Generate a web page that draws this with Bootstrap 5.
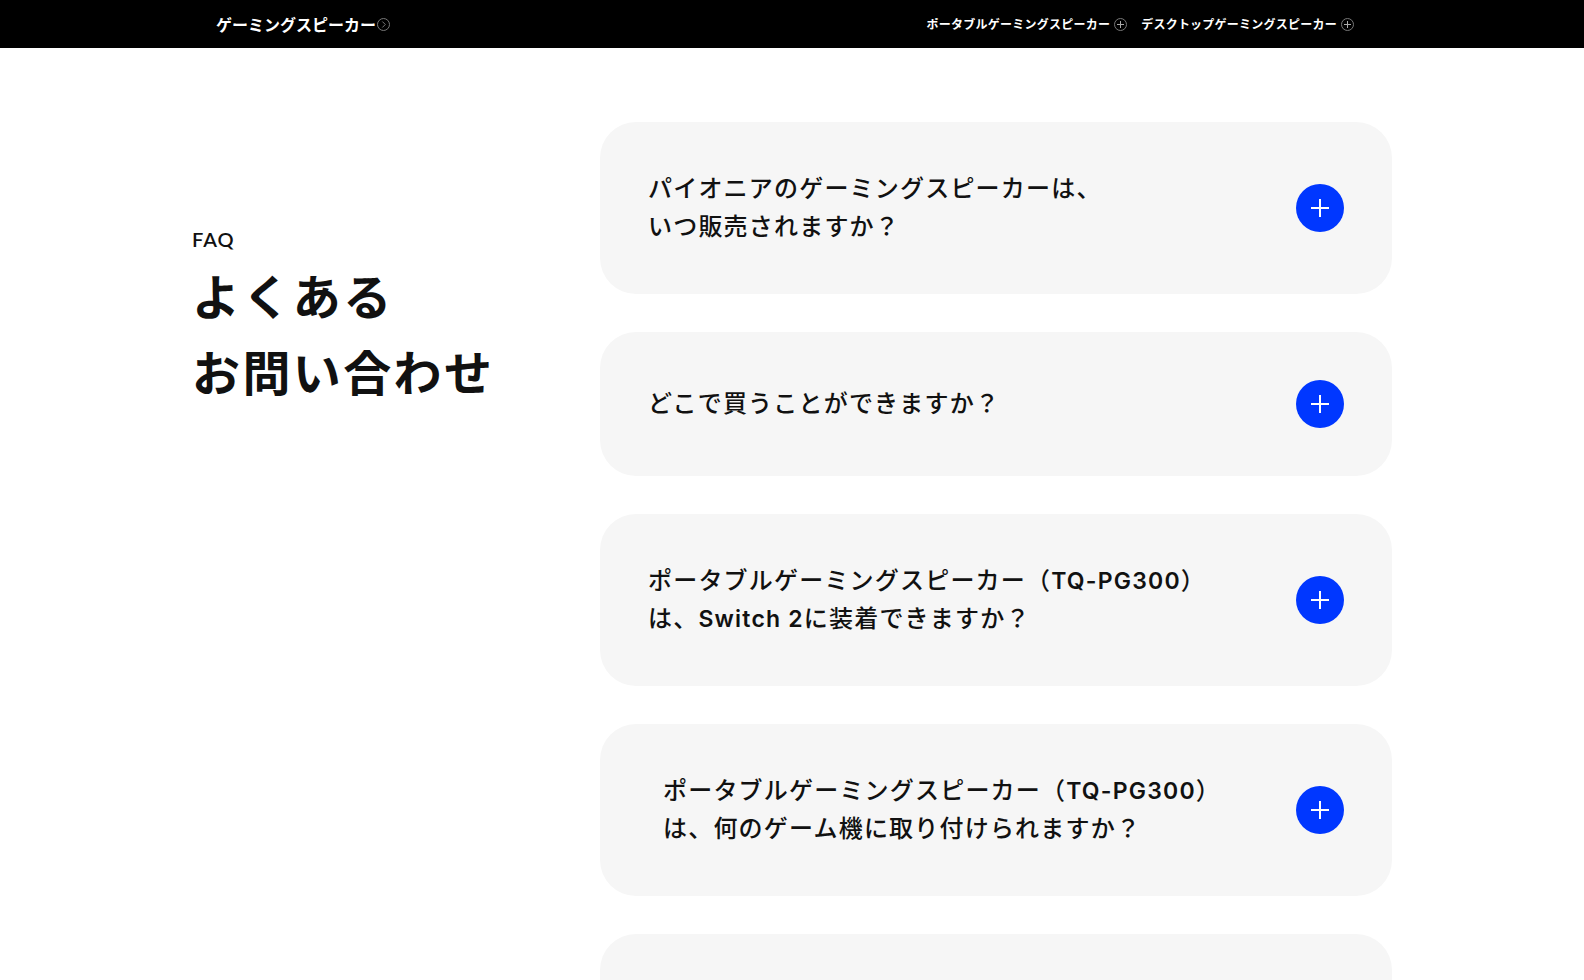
<!DOCTYPE html>
<html lang="ja">
<head>
<meta charset="utf-8">
<meta name="viewport" content="width=device-width, initial-scale=1">
<title>よくあるお問い合わせ</title>
<link href="https://cdn.jsdelivr.net/npm/bootstrap@5.3.0/dist/css/bootstrap.min.css" rel="stylesheet">
<style>
  body { font-family: Lato, "Noto Sans CJK JP", sans-serif; color: #111; }
  .wrap { max-width: 1200px; }
  .site-nav { min-height: 48px; font-family: "Noto Sans CJK JP", sans-serif; font-weight: 700; }
  .site-nav .wrap { padding-left: 24px; padding-right: 38px; }
  .site-nav a { color: #fff; }
  .brand-link { font-size: 16px; line-height: 24px; gap: 1px; }
  .menu-links { gap: 14px; }
  .menu-link { font-size: 12px; line-height: 24px; letter-spacing: .02em; gap: 4px; }
  .ring { width: 13px; height: 13px; fill: none; stroke: #777; }
  .faq-layout { padding-top: 74px; }
  .faq-title { padding-top: 103px; }
  .faq-label { font-size: 20px; line-height: 28px; font-weight: 600; letter-spacing: .05em; }
  .faq-heading { font-size: 48px; line-height: 76px; font-weight: 700; letter-spacing: .05em; padding-top: 6px; }
  .faq-list { gap: 38px; }
  .faq-item { background: #f6f6f6; border-radius: 36px; min-height: 144px; }
  .faq-question { padding: 48px; color: #111; font-size: 24px; line-height: 38px; font-weight: 500; letter-spacing: .05em; }
  .question-text { margin-top: -2px; }
  .latin { font-family: Inter, sans-serif; font-size: 23px; font-weight: 600; line-height: 1; }
  .indent { padding-left: 15px; }
  .plus { width: 48px; height: 48px; }
  @media (min-width: 992px) {
    .faq-title { width: 34%; }
    .faq-list { width: 66%; }
    .faq-item { min-height: 144px; }
    .faq-question { min-height: 144px; }
    .faq-question:has(br) { min-height: 172px; }
  }
</style>
</head>
<body class="vh-100 overflow-hidden bg-white">
<nav class="site-nav bg-black d-flex align-items-center">
  <div class="wrap container-fluid d-flex align-items-center justify-content-between">
    <a href="#" class="brand-link d-flex align-items-center text-decoration-none">ゲーミングスピーカー
      <svg class="ring" viewBox="0 0 13 13" aria-hidden="true"><circle cx="6.5" cy="6.5" r="6"/><path d="M5.3 3.5 8.3 6.5 5.3 9.5"/></svg></a>
    <div class="menu-links d-flex">
      <a href="#" class="menu-link d-flex align-items-center text-decoration-none">ポータブルゲーミングスピーカー
        <svg class="ring" viewBox="0 0 13 13" aria-hidden="true"><circle cx="6.5" cy="6.5" r="6"/><path d="M6.5 3v7M3 6.5h7" stroke="#aaa"/></svg></a>
      <a href="#" class="menu-link d-flex align-items-center text-decoration-none">デスクトップゲーミングスピーカー
        <svg class="ring" viewBox="0 0 13 13" aria-hidden="true"><circle cx="6.5" cy="6.5" r="6"/><path d="M6.5 3v7M3 6.5h7" stroke="#aaa"/></svg></a>
    </div>
  </div>
</nav>
<main class="faq-layout wrap container-fluid px-0 d-lg-flex">
  <header class="faq-title flex-shrink-0">
    <p class="faq-label mb-0">FAQ</p>
    <h1 class="faq-heading mb-0">よくある<br>お問い合わせ</h1>
  </header>
  <section class="faq-list d-flex flex-column">
    <div class="faq-item">
      <button type="button" class="faq-question btn border-0 w-100 d-flex align-items-center justify-content-between text-start">
        <span class="question-text">パイオニアのゲーミングスピーカーは、<br>いつ販売されますか？</span>
        <svg class="plus flex-shrink-0" viewBox="0 0 48 48" aria-hidden="true"><circle cx="24" cy="24" r="24" fill="#0037ff"/><path d="M24 15v18M15 24h18" stroke="#fff" stroke-width="2"/></svg>
      </button>
    </div>
    <div class="faq-item">
      <button type="button" class="faq-question btn border-0 w-100 d-flex align-items-center justify-content-between text-start">
        <span class="question-text">どこで買うことができますか？</span>
        <svg class="plus flex-shrink-0" viewBox="0 0 48 48" aria-hidden="true"><circle cx="24" cy="24" r="24" fill="#0037ff"/><path d="M24 15v18M15 24h18" stroke="#fff" stroke-width="2"/></svg>
      </button>
    </div>
    <div class="faq-item">
      <button type="button" class="faq-question btn border-0 w-100 d-flex align-items-center justify-content-between text-start">
        <span class="question-text">ポータブルゲーミングスピーカー（<span class="latin">TQ-PG300</span>）<br>は、<span class="latin">Switch 2</span>に装着できますか？</span>
        <svg class="plus flex-shrink-0" viewBox="0 0 48 48" aria-hidden="true"><circle cx="24" cy="24" r="24" fill="#0037ff"/><path d="M24 15v18M15 24h18" stroke="#fff" stroke-width="2"/></svg>
      </button>
    </div>
    <div class="faq-item">
      <button type="button" class="faq-question btn border-0 w-100 d-flex align-items-center justify-content-between text-start">
        <span class="question-text indent">ポータブルゲーミングスピーカー（<span class="latin">TQ-PG300</span>）<br>は、何のゲーム機に取り付けられますか？</span>
        <svg class="plus flex-shrink-0" viewBox="0 0 48 48" aria-hidden="true"><circle cx="24" cy="24" r="24" fill="#0037ff"/><path d="M24 15v18M15 24h18" stroke="#fff" stroke-width="2"/></svg>
      </button>
    </div>
    <div class="faq-item"></div>
  </section>
</main>
<script src="https://cdn.jsdelivr.net/npm/bootstrap@5.3.0/dist/js/bootstrap.bundle.min.js"></script>
</body>
</html>
